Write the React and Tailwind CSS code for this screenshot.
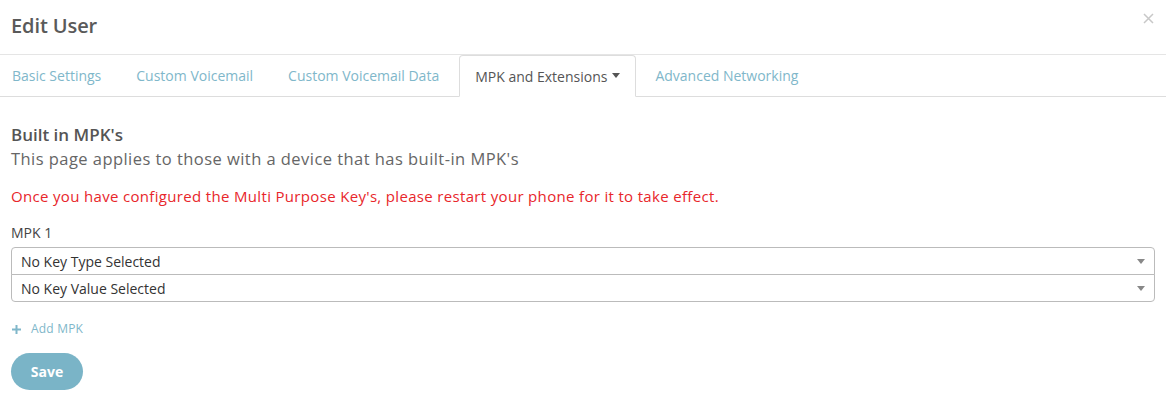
import React from 'react';

const tabs = ['Basic Settings', 'Custom Voicemail', 'Custom Voicemail Data', 'MPK and Extensions', 'Advanced Networking'];

const Caret = () => (
  <svg width="8" height="5" viewBox="0 0 8 5" className="inline-block ml-[5px] mb-[2px]">
    <path d="M0 0h8L4 5z" fill="#555" />
  </svg>
);

const SelectBox = ({ label, className }) => (
  <div className={`relative h-[28px] border border-[#bbb] bg-white flex items-center px-[9px] text-[14px] text-[#333] ${className}`}>
    {label}
    <svg width="8" height="5" viewBox="0 0 8 5" className="absolute right-[9px] top-[11px]">
      <path d="M0 0h8L4 5z" fill="#888" />
    </svg>
  </div>
);

export default function App() {
  return (
    <div className="w-[1166px] h-[414px] bg-white overflow-hidden" style={{ fontFamily: '"Open Sans", sans-serif' }}>
      {/* Modal header */}
      <div className="relative h-[55px] border-b border-[#e5e5e5] flex items-center px-[11px]">
        <h1 className="text-[20px] font-semibold text-[#5a5a5a] tracking-[-0.1px] -mt-[2px]">Edit User</h1>
        <svg width="11" height="11" viewBox="0 0 11 11" className="absolute right-[12px] top-[13px]">
          <path d="M1 1l9 9M10 1l-9 9" stroke="#c8c8c8" strokeWidth="1.5" />
        </svg>
      </div>

      {/* Tabs */}
      <div className="flex h-[42px] border-b border-[#ddd] pl-[12px]">
        {tabs.map((t, i) => {
          const active = i === 3;
          return (
            <div
              key={t}
              className={
                active
                  ? 'h-[42px] px-[15px] mr-[19px] -ml-[15px] flex items-center border border-[#ddd] border-b-white rounded-t-[4px] bg-white text-[14px] text-[#555] relative top-[1px] -mt-[1px]'
                  : 'h-[41px] mr-[35px] flex items-center text-[14px] text-[#80b7ca]'
              }
            >
              {t}
              {active && <Caret />}
            </div>
          );
        })}
      </div>

      {/* Content */}
      <div className="px-[11px] pt-[27px]">
        <h2 className="text-[17px] font-semibold text-[#555] leading-[22px]">Built in MPK's</h2>
        <p className="text-[16.5px] text-[#666] leading-[22px] mt-[2px] tracking-[0.45px]">
          This page applies to those with a device that has built-in MPK's
        </p>
        <p className="text-[15px] text-[#e8262b] leading-[20px] mt-[16px] tracking-[0.33px]">
          Once you have configured the Multi Purpose Key's, please restart your phone for it to take effect.
        </p>
        <div className="text-[14px] text-[#444] leading-[18px] mt-[18px]">MPK 1</div>
        <div className="mt-[5px]">
          <SelectBox label="No Key Type Selected" className="rounded-t-[4px]" />
          <SelectBox label="No Key Value Selected" className="rounded-b-[4px] -mt-px" />
        </div>
        <div className="flex items-center mt-[18px] text-[12px] text-[#80b7ca]">
          <svg width="9" height="9" viewBox="0 0 9 9" className="mr-[10px] ml-[1px]">
            <path d="M4.5 0v9M0 4.5h9" stroke="#80b7ca" strokeWidth="2" />
          </svg>
          <span className="tracking-[0.2px]">Add MPK</span>
        </div>
        <button className="mt-[15px] w-[72px] h-[37px] rounded-full bg-[#7ab4c7] text-white text-[14px] font-bold">
          Save
        </button>
      </div>
    </div>
  );
}
